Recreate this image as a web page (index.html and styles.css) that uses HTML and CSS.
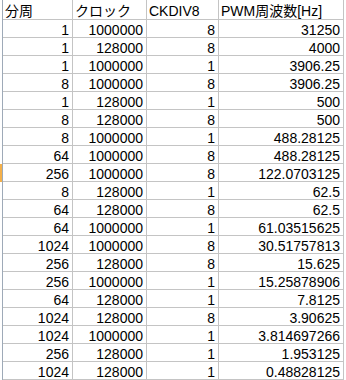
FILE: index.html
```html
<!DOCTYPE html>
<html lang="ja">
<head>
<meta charset="utf-8">
<title>PWM周波数</title>
<link rel="stylesheet" href="styles.css">
</head>
<body>
<div class="sheet">
  <div class="gut"></div><div class="c hd">分周</div><div class="c hd">クロック</div><div class="c hd">CKDIV8</div><div class="c hd">PWM周波数[Hz]</div>
  <div class="gut"></div><div class="c">1</div><div class="c">1000000</div><div class="c">8</div><div class="c">31250</div>
  <div class="gut"></div><div class="c">1</div><div class="c">128000</div><div class="c">8</div><div class="c">4000</div>
  <div class="gut"></div><div class="c">1</div><div class="c">1000000</div><div class="c">1</div><div class="c">3906.25</div>
  <div class="gut"></div><div class="c">8</div><div class="c">1000000</div><div class="c">8</div><div class="c">3906.25</div>
  <div class="gut"></div><div class="c">1</div><div class="c">128000</div><div class="c">1</div><div class="c">500</div>
  <div class="gut"></div><div class="c">8</div><div class="c">128000</div><div class="c">8</div><div class="c">500</div>
  <div class="gut"></div><div class="c">8</div><div class="c">1000000</div><div class="c">1</div><div class="c">488.28125</div>
  <div class="gut"></div><div class="c">64</div><div class="c">1000000</div><div class="c">8</div><div class="c">488.28125</div>
  <div class="gut sel"></div><div class="c">256</div><div class="c">1000000</div><div class="c">8</div><div class="c">122.0703125</div>
  <div class="gut"></div><div class="c">8</div><div class="c">128000</div><div class="c">1</div><div class="c">62.5</div>
  <div class="gut"></div><div class="c">64</div><div class="c">128000</div><div class="c">8</div><div class="c">62.5</div>
  <div class="gut"></div><div class="c">64</div><div class="c">1000000</div><div class="c">1</div><div class="c">61.03515625</div>
  <div class="gut"></div><div class="c">1024</div><div class="c">1000000</div><div class="c">8</div><div class="c">30.51757813</div>
  <div class="gut"></div><div class="c">256</div><div class="c">128000</div><div class="c">8</div><div class="c">15.625</div>
  <div class="gut"></div><div class="c">256</div><div class="c">1000000</div><div class="c">1</div><div class="c">15.25878906</div>
  <div class="gut"></div><div class="c">64</div><div class="c">128000</div><div class="c">1</div><div class="c">7.8125</div>
  <div class="gut"></div><div class="c">1024</div><div class="c">128000</div><div class="c">8</div><div class="c">3.90625</div>
  <div class="gut"></div><div class="c">1024</div><div class="c">1000000</div><div class="c">1</div><div class="c">3.814697266</div>
  <div class="gut"></div><div class="c">256</div><div class="c">128000</div><div class="c">1</div><div class="c">1.953125</div>
  <div class="gut"></div><div class="c">1024</div><div class="c">128000</div><div class="c">1</div><div class="c">0.48828125</div>
</div>
</body>
</html>
```

FILE: styles.css
```css
html, body {
  margin: 0;
  padding: 0;
  background: #ffffff;
}

.sheet {
  display: grid;
  grid-template-columns: 3px 70px 74px 72px 125px;
  grid-template-rows: 20px;
  grid-auto-rows: 18px;
  font-family: "Liberation Sans", "Noto Sans CJK JP", sans-serif;
  font-size: 14px;
  color: #000000;
}

.gut {
  border-right: 1px solid #9eaab8;
  box-sizing: border-box;
}

.gut.sel {
  background: linear-gradient(to right, #f4b04a 0, #f4b04a 2px, transparent 2px);
}

.c {
  box-sizing: border-box;
  border-right: 1px solid #c4c4c4;
  border-bottom: 1px solid #c4c4c4;
  text-align: right;
  padding: 4px 3px 0 0;
  line-height: 13px;
  white-space: nowrap;
  overflow: hidden;
}

.c.hd {
  text-align: left;
  padding: 5px 0 0 2px;
}
```
